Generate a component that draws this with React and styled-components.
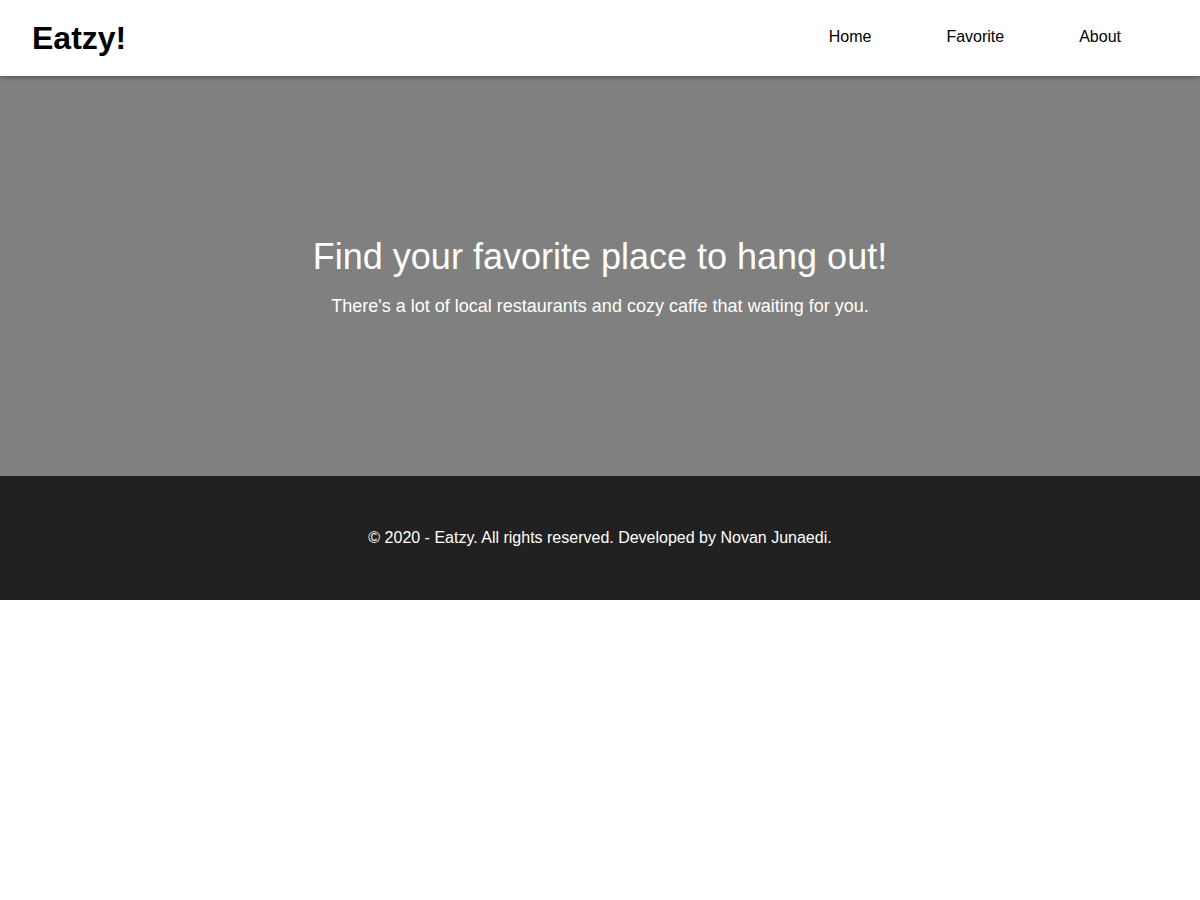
import React from "react"
import styled, { createGlobalStyle } from "styled-components"

const GlobalStyle = createGlobalStyle`
  * { box-sizing: border-box; }
  body {
    margin: 0;
    font-family: "Liberation Sans", Arial, sans-serif;
    background: #fff;
  }
`

const Header = styled.header`
  position: relative;
  z-index: 2;
  height: 76px;
  display: flex;
  align-items: center;
  justify-content: space-between;
  padding: 0 79px 0 32px;
  background: #fff;
  box-shadow: 0 2px 4px rgba(0, 0, 0, 0.3);
`

const Logo = styled.h1`
  margin: 0;
  font-size: 32px;
  font-weight: bold;
  color: #000;
`

const Nav = styled.ul`
  display: flex;
  gap: 75px;
  margin: 0 0 2px;
  padding: 0;
  list-style: none;
`

const NavLink = styled.a`
  font-size: 16px;
  color: #000;
  text-decoration: none;
`

const Hero = styled.section`
  height: 400px;
  background: #808080;
  display: flex;
  flex-direction: column;
  align-items: center;
  justify-content: center;
  color: #fff;
  text-align: center;
`

const HeroTitle = styled.h2`
  margin: 0 0 18px;
  font-size: 36px;
  font-weight: normal;
`

const HeroText = styled.p`
  margin: 0;
  font-size: 18px;
`

const Footer = styled.footer`
  height: 124px;
  background: #212121;
  color: #fff;
  display: flex;
  align-items: center;
  justify-content: center;
  font-size: 16px;
`

export default function App() {
  return (
    <>
      <GlobalStyle />
      <Header>
        <Logo>Eatzy!</Logo>
        <nav>
          <Nav>
            <li><NavLink href="#">Home</NavLink></li>
            <li><NavLink href="#">Favorite</NavLink></li>
            <li><NavLink href="#">About</NavLink></li>
          </Nav>
        </nav>
      </Header>
      <main>
        <Hero>
          <HeroTitle>Find your favorite place to hang out!</HeroTitle>
          <HeroText>There's a lot of local restaurants and cozy caffe that waiting for you.</HeroText>
        </Hero>
      </main>
      <Footer>© 2020 - Eatzy. All rights reserved. Developed by Novan Junaedi.</Footer>
    </>
  )
}
